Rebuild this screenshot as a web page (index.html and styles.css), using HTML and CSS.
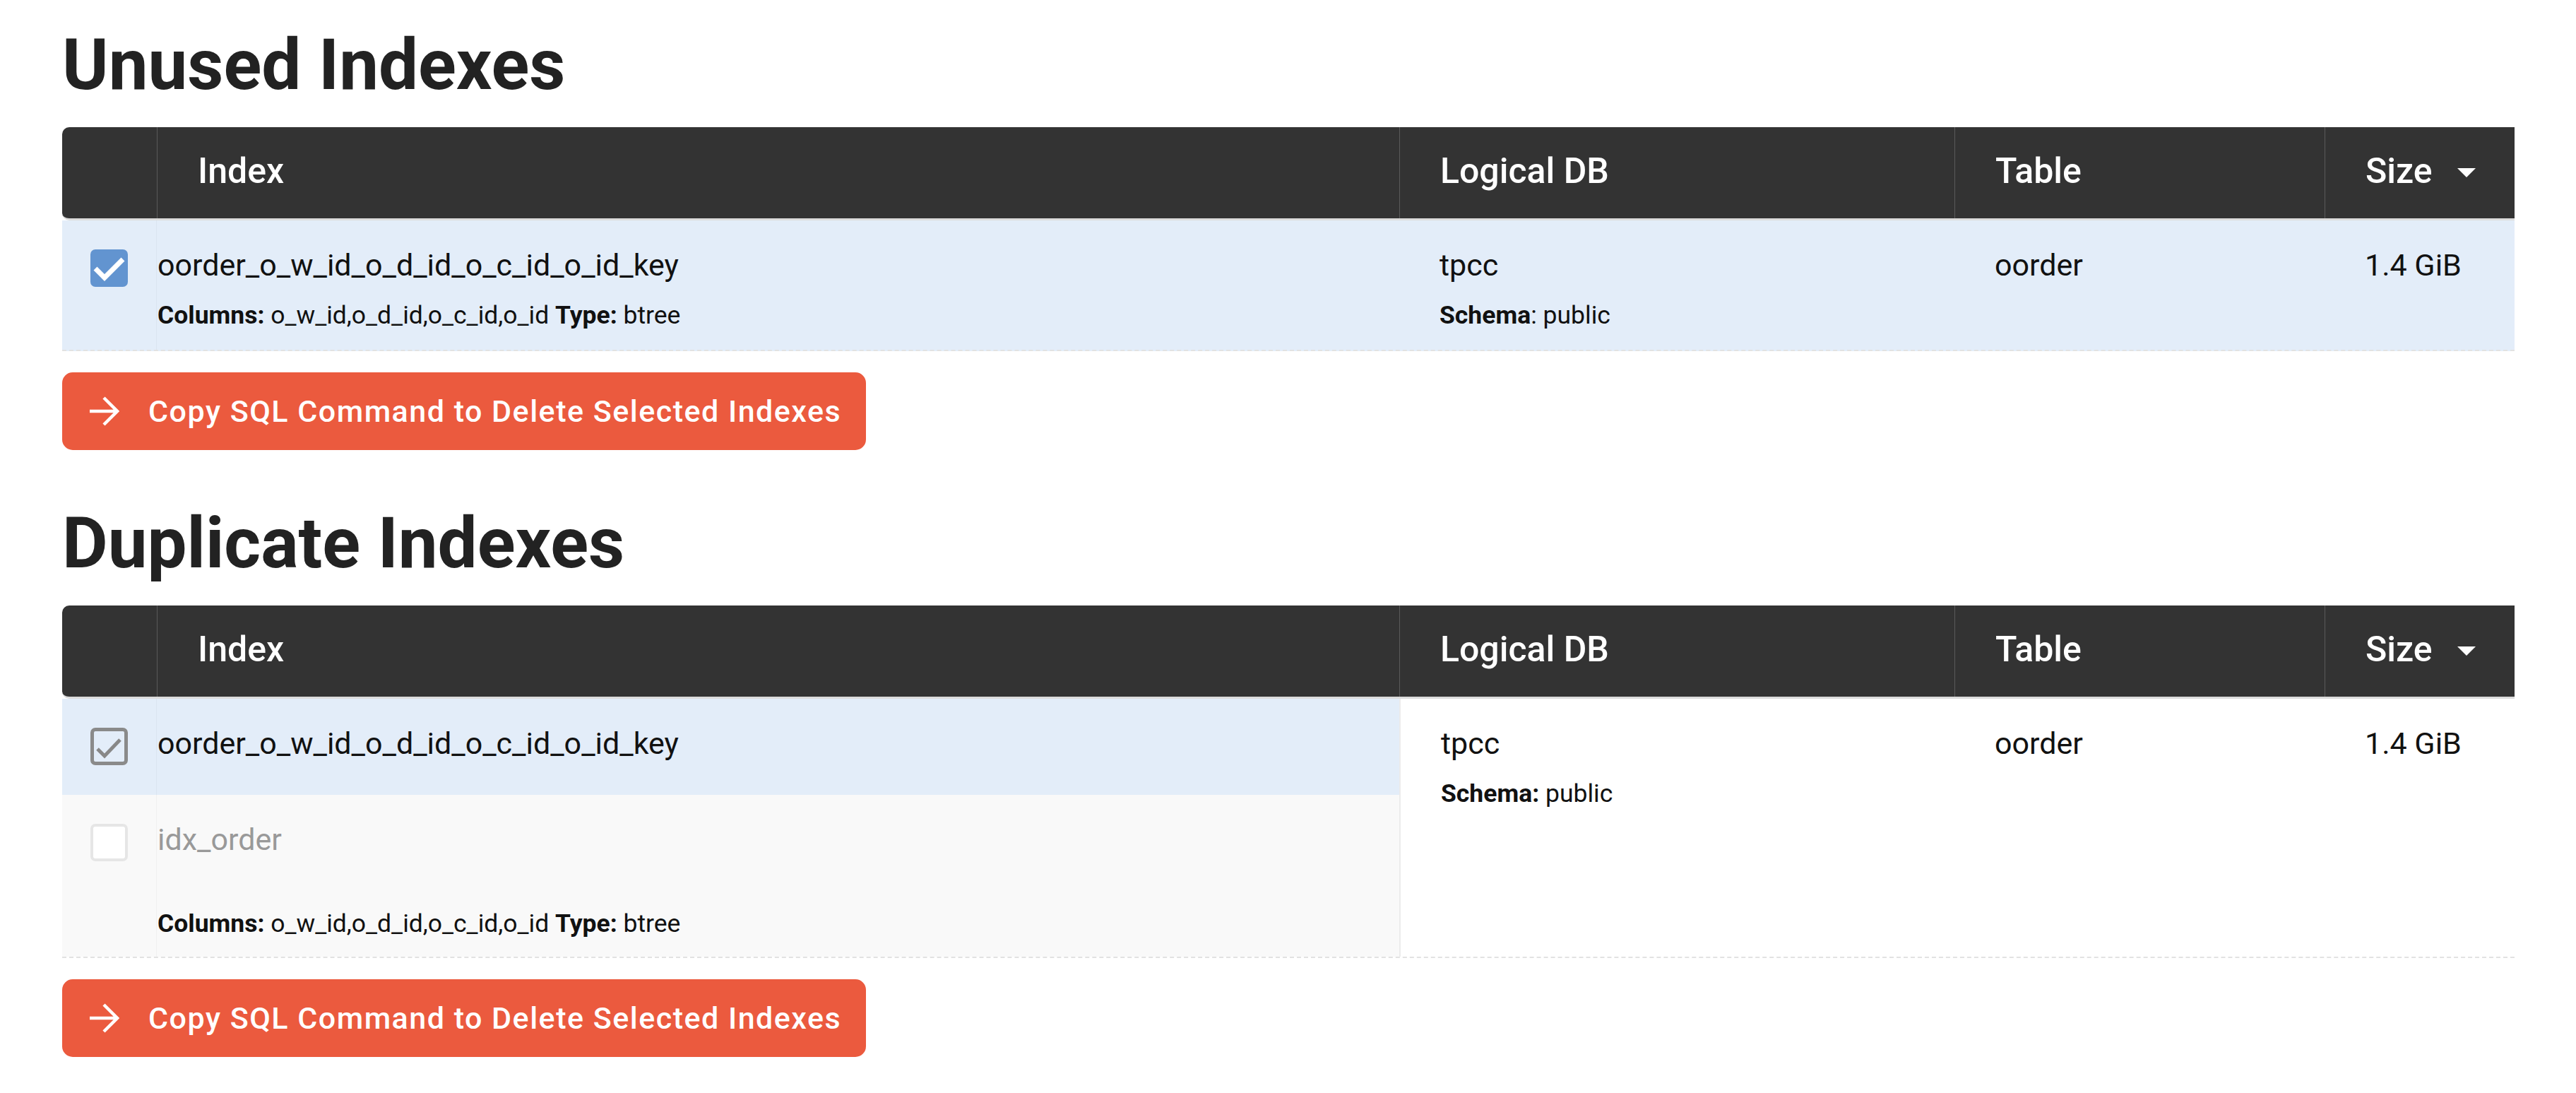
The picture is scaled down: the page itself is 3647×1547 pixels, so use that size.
FILE: index.html
```html
<!DOCTYPE html>
<html>
<head>
<meta charset="utf-8">
<link rel="stylesheet" href="styles.css">
</head>
<body>
<div class="page">
  <h1 class="title">Unused Indexes</h1>
  <div class="table">
    <div class="thead">
      <div class="th th-check"></div>
      <div class="th">Index</div>
      <div class="th">Logical DB</div>
      <div class="th">Table</div>
      <div class="th th-size">Size <span class="caret"></span></div>
    </div>
    <div class="row selected">
      <div class="cell cell-check">
        <span class="cb cb-on"><svg viewBox="0 0 53 53" width="53" height="53"><polyline points="7,27 20,40 46,14" fill="none" stroke="#fff" stroke-width="7"/></svg></span>
      </div>
      <div class="cell cell-name">
        <div class="name">oorder_o_w_id_o_d_id_o_c_id_o_id_key</div>
        <div class="meta"><b>Columns:</b> o_w_id,o_d_id,o_c_id,o_id <b>Type:</b> btree</div>
      </div>
      <div class="cell cell-db">
        <div class="name">tpcc</div>
        <div class="meta"><b>Schema</b>: public</div>
      </div>
      <div class="cell"><div class="name">oorder</div></div>
      <div class="cell"><div class="name">1.4 GiB</div></div>
    </div>
  </div>
  <button class="btn"><svg class="arrow" viewBox="0 0 42 42" width="42" height="42"><path d="M0 21 H39 M20 2 L39 21 L20 40" fill="none" stroke="#fff" stroke-width="4.5"/></svg><span>Copy SQL Command to Delete Selected Indexes</span></button>

  <h1 class="title title-2">Duplicate Indexes</h1>
  <div class="table">
    <div class="thead">
      <div class="th th-check"></div>
      <div class="th">Index</div>
      <div class="th">Logical DB</div>
      <div class="th">Table</div>
      <div class="th th-size">Size <span class="caret"></span></div>
    </div>
    <div class="row">
      <div class="group">
        <div class="sub selected sub-a">
          <div class="cell cell-check">
            <span class="cb cb-dis-on"><svg viewBox="0 0 53 53" width="53" height="53"><polyline points="10,30 20,40 42,17" fill="none" stroke="#888" stroke-width="5"/></svg></span>
          </div>
          <div class="cell cell-name">
            <div class="name">oorder_o_w_id_o_d_id_o_c_id_o_id_key</div>
          </div>
        </div>
        <div class="sub gray sub-b">
          <div class="cell cell-check">
            <span class="cb cb-dis-off"></span>
          </div>
          <div class="cell cell-name">
            <div class="name muted">idx_order</div>
            <div class="meta meta-low"><b>Columns:</b> o_w_id,o_d_id,o_c_id,o_id <b>Type:</b> btree</div>
          </div>
        </div>
      </div>
      <div class="cell cell-db cell-divide">
        <div class="name">tpcc</div>
        <div class="meta"><b>Schema:</b> public</div>
      </div>
      <div class="cell"><div class="name">oorder</div></div>
      <div class="cell"><div class="name">1.4 GiB</div></div>
    </div>
  </div>
  <button class="btn"><svg class="arrow" viewBox="0 0 42 42" width="42" height="42"><path d="M0 21 H39 M20 2 L39 21 L20 40" fill="none" stroke="#fff" stroke-width="4.5"/></svg><span>Copy SQL Command to Delete Selected Indexes</span></button>
</div>
</body>
</html>
```
FILE: styles.css
```css
html, body {
  margin: 0;
  padding: 0;
  background: #fff;
}
body {
  font-family: Roboto, "Liberation Sans", Arial, sans-serif;
  color: #111;
}
.page {
  padding: 33px 0 0 88px;
}
.title {
  margin: 0 0 29px 0;
  font-size: 99.6px;
  line-height: 118px;
  font-weight: 700;
  color: #222;
  letter-spacing: 0;
}
.title-2 {
  margin-top: 73px;
}
.table {
  width: 3472px;
  overflow: hidden;
}
.thead, .row {
  display: grid;
  grid-template-columns: 134px 1759px 786px 524px 269px;
}
.thead {
  height: 129px;
  background: #333;
  border-radius: 10px 0 0 10px;
  border-bottom: 3px solid #dcdcdc;
}
.th {
  display: flex;
  align-items: center;
  padding: 0 0 5px 57px;
  color: #fff;
  font-size: 50px;
  font-weight: 500;
  border-left: 1px solid #5a5a5a;
  box-sizing: border-box;
}
.th-check {
  border-left: none;
}
.caret {
  display: inline-block;
  width: 0;
  height: 0;
  margin-left: 35px;
  margin-top: 4px;
  border-left: 13px solid transparent;
  border-right: 13px solid transparent;
  border-top: 13px solid #fff;
}
.row {
  border-bottom: 2px dashed #e2e2e2;
}
.row.selected, .sub.selected {
  background: #e3edf9;
}
.sub.gray {
  background: #f9f9f9;
}
.cell {
  padding: 38px 0 28px 57px;
  box-sizing: border-box;
}
.cell-check {
  padding: 41px 0 0 0;
  display: flex;
  justify-content: center;
  align-items: flex-start;
  border-right: 1px solid rgba(0, 0, 0, 0.035);
}
.cell-name {
  padding-left: 1px;
}
.cell-divide {
  border-left: 2px solid #ececec;
}
.name {
  font-size: 43px;
  line-height: 50px;
}
.muted {
  color: #999;
}
.meta {
  margin-top: 25px;
  font-size: 35.5px;
  line-height: 42px;
}
.meta b {
  font-weight: 700;
}
.group {
  grid-column: 1 / 3;
  display: flex;
  flex-direction: column;
}
.sub {
  display: grid;
  grid-template-columns: 134px 1759px;
}
.sub-a .cell-name {
  padding-bottom: 48px;
}
.sub-b .cell-name {
  padding-bottom: 26px;
}
.meta-low {
  margin-top: 73px;
}
.cb {
  display: block;
  width: 53px;
  height: 53px;
  box-sizing: border-box;
  border-radius: 7px;
}
.cb svg {
  display: block;
}
.cb-on {
  background: #6294d0;
}
.cb-dis-on {
  border: 5px solid #8a8a8a;
  background: transparent;
}
.cb-dis-on svg {
  margin: -5px 0 0 -5px;
}
.cb-dis-off {
  border: 4px solid #e6e6e6;
  background: #fff;
}
.btn {
  display: flex;
  align-items: center;
  height: 110px;
  margin-top: 30px;
  padding: 0 35px 0 39px;
  border: none;
  border-radius: 15px;
  background: #eb5a3e;
  color: #fff;
  font-family: Roboto, "Liberation Sans", Arial, sans-serif;
  font-size: 43px;
  font-weight: 500;
  letter-spacing: 1.5px;
  cursor: pointer;
}
.btn .arrow {
  margin-right: 41px;
  flex: none;
}
```
